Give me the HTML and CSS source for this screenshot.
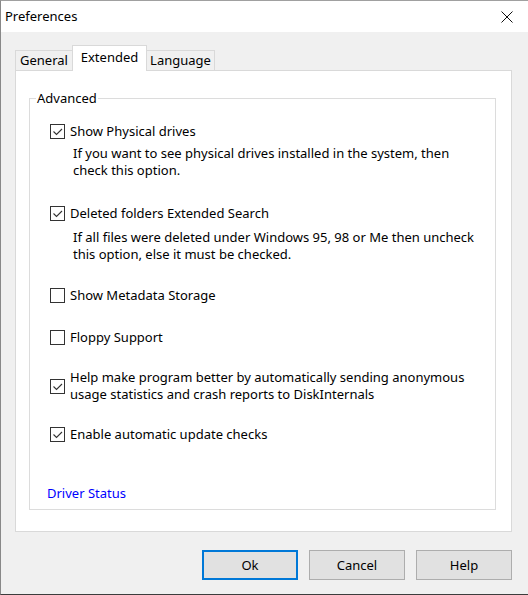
FILE: index.html
```html
<!DOCTYPE html>
<html>
<head>
<meta charset="utf-8">
<link rel="stylesheet" href="styles.css">
</head>
<body>
<div class="window">
  <div class="titlebar">
    <span class="title">Preferences</span>
    <svg class="close" width="12" height="12" viewBox="0 0 12 12"><path d="M0.5 0.5 L11.5 11.5 M11.5 0.5 L0.5 11.5" stroke="#111" stroke-width="1" fill="none"/></svg>
  </div>
  <div class="body">
    <div class="tabs">
      <div class="tab tab-general">General</div>
      <div class="tab tab-extended active">Extended</div>
      <div class="tab tab-language">Language</div>
    </div>
    <div class="panel">
      <fieldset class="group">
        <legend>Advanced</legend>
        <div class="opt">
          <div class="row"><span class="cb checked"><svg viewBox="0 0 13 13" width="13" height="13"><path d="M2.5 6.5 L5.5 9.5 L11 4" stroke="#333" stroke-width="1.1" fill="none"/></svg></span><span class="label">Show Physical drives</span></div>
          <div class="desc d1">If you want to see physical drives installed in the system, then<br>check this option.</div>
        </div>
        <div class="opt g26">
          <div class="row"><span class="cb checked"><svg viewBox="0 0 13 13" width="13" height="13"><path d="M2.5 6.5 L5.5 9.5 L11 4" stroke="#333" stroke-width="1.1" fill="none"/></svg></span><span class="label">Deleted folders Extended Search</span></div>
          <div class="desc d2">If all files were deleted under Windows 95, 98 or Me then uncheck<br>this option, else it must be checked.</div>
        </div>
        <div class="opt g24">
          <div class="row"><span class="cb"></span><span class="label">Show Metadata Storage</span></div>
        </div>
        <div class="opt g25">
          <div class="row"><span class="cb"></span><span class="label">Floppy Support</span></div>
        </div>
        <div class="opt g23">
          <div class="row"><span class="cb checked"><svg viewBox="0 0 13 13" width="13" height="13"><path d="M2.5 6.5 L5.5 9.5 L11 4" stroke="#333" stroke-width="1.1" fill="none"/></svg></span><span class="label">Help make program better by automatically sending anonymous<br>usage statistics and crash reports to DiskInternals</span></div>
        </div>
        <div class="opt g23">
          <div class="row"><span class="cb checked"><svg viewBox="0 0 13 13" width="13" height="13"><path d="M2.5 6.5 L5.5 9.5 L11 4" stroke="#333" stroke-width="1.1" fill="none"/></svg></span><span class="label">Enable automatic update checks</span></div>
        </div>
        <a class="link">Driver Status</a>
      </fieldset>
    </div>
    <div class="buttons">
      <div class="btn default">Ok</div>
      <div class="btn">Cancel</div>
      <div class="btn">Help</div>
    </div>
  </div>
</div>
</body>
</html>
```
FILE: styles.css
```css
html, body {
  margin: 0;
  padding: 0;
}
body {
  width: 528px;
  height: 595px;
  overflow: hidden;
  font-family: "Noto Sans", "Open Sans", sans-serif;
  font-size: 13px;
  color: #000;
}
.window {
  box-sizing: border-box;
  width: 528px;
  height: 595px;
  border-top: 1px solid #a0a0a0;
  border-left: 1px solid #888;
  border-bottom: 1px solid #3c3c3c;
  display: flex;
  flex-direction: column;
  background: #f0f0f0;
}
.titlebar {
  height: 31px;
  background: #fff;
  display: flex;
  align-items: center;
  justify-content: space-between;
  padding: 0 15px 0 4px;
  flex-shrink: 0;
}
.title {
  line-height: 17px;
}
.close {
  display: block;
}
.body {
  flex: 1;
  padding-top: 13px;
}
.tabs {
  display: flex;
  align-items: flex-end;
  height: 26px;
  margin-left: 14px;
  margin-bottom: -1px;
  position: relative;
  z-index: 1;
}
.tab {
  box-sizing: border-box;
  height: 20px;
  margin-bottom: 1px;
  border: 1px solid #d9d9d9;
  border-bottom: none;
  background: #f0f0f0;
  text-align: center;
  line-height: 19px;
}
.tab-general { width: 58px; }
.tab-extended { width: 75px; margin-left: -1px; }
.tab-language { width: 69px; margin-left: -1px; }
.tab.active {
  height: 26px;
  margin-bottom: 0;
  background: #fff;
  line-height: 22px;
  position: relative;
  z-index: 2;
}
.panel {
  box-sizing: border-box;
  margin-left: 14px;
  width: 497px;
  height: 462px;
  background: #fff;
  border: 1px solid #d9d9d9;
  padding: 19px 15px 0 13px;
}
.group {
  box-sizing: border-box;
  height: 420px;
  margin: 0;
  padding: 17px 10px 0 20px;
  border: 1px solid #dcdcdc;
  min-width: 0;
}
.group legend {
  padding: 0 1px;
  margin-left: -14px;
  line-height: 16px;
}
.opt + .opt { margin-top: 23px; }
.opt.g24 { margin-top: 24px; }
.opt.g25 { margin-top: 25px; }
.opt.g26 { margin-top: 26px; }
.row {
  display: flex;
  align-items: center;
  line-height: 17px;
}
.cb {
  box-sizing: border-box;
  width: 15px;
  height: 15px;
  border: 1px solid #333;
  background: #fff;
  flex-shrink: 0;
  display: block;
}
.cb svg { display: block; }
.label {
  margin-left: 5px;
}
.desc {
  margin-left: 23px;
  line-height: 17px;
}
.desc.d1 { margin-top: 5px; }
.desc.d2 { margin-top: 7px; }
.link {
  display: block;
  color: #0000ff;
  margin-top: 42px;
  margin-left: -3px;
  line-height: 17px;
  cursor: pointer;
}
.buttons {
  display: flex;
  justify-content: flex-end;
  gap: 11px;
  margin-top: 18px;
  margin-right: 16px;
}
.btn {
  box-sizing: border-box;
  width: 96px;
  height: 30px;
  background: #e1e1e1;
  border: 1px solid #adadad;
  display: flex;
  align-items: center;
  justify-content: center;
}
.btn.default {
  border: 2px solid #0078d7;
}
```
